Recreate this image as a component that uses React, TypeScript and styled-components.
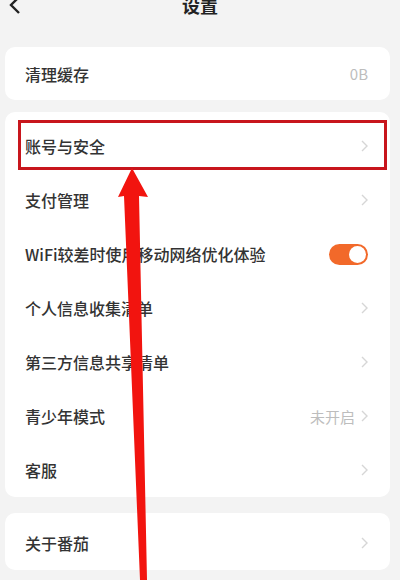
import styled, { createGlobalStyle } from "styled-components";

const Global = createGlobalStyle`
  html, body {
    margin: 0;
    padding: 0;
    background: #f3f3f3;
  }
  body {
    font-family: "Noto Sans CJK SC", "Noto Sans", sans-serif;
    color: #333;
  }
`;

const Page = styled.div`
  position: relative;
  width: 400px;
  height: 580px;
  overflow: hidden;
  background: #f3f3f3;
`;

const Header = styled.div`
  height: 48px;
  margin-top: -19px;
  display: flex;
  align-items: center;
  justify-content: center;
  position: relative;
`;

const Back = styled.svg`
  position: absolute;
  left: 8px;
  top: 14px;
`;

const Title = styled.div`
  font-size: 18px;
  font-weight: 700;
  color: #222;
`;

const Card = styled.div<{ $top: number; $pad?: number }>`
  margin: ${(p) => p.$top}px 10px 0 5px;
  padding-top: ${(p) => p.$pad ?? 0}px;
  background: #fff;
  border-radius: 10px;
`;

const Row = styled.div<{ $h?: number; $marked?: boolean }>`
  position: relative;
  height: ${(p) => p.$h ?? 54}px;
  display: flex;
  align-items: center;
  justify-content: space-between;
  padding: 0 22px 0 20px;
  font-size: 16px;

  ${(p) =>
    p.$marked &&
    `
    &::after {
      content: "";
      position: absolute;
      left: 13px;
      right: 3px;
      top: 1px;
      bottom: 3px;
      border: 3px solid #c8161d;
    }
  `}
`;

const Label = styled.span`
  color: #333;
  font-weight: 500;
`;

const Right = styled.span`
  display: flex;
  align-items: center;
  gap: 6px;
  color: #bdbdbd;
  font-size: 15px;
`;

const Toggle = styled.span`
  width: 39px;
  height: 21px;
  border-radius: 11px;
  background: #f2692a;
  position: relative;
  &::after {
    content: "";
    position: absolute;
    right: 2px;
    top: 2px;
    width: 17px;
    height: 17px;
    border-radius: 50%;
    background: #fff;
  }
`;

const Arrow = styled.svg`
  position: absolute;
  left: 0;
  top: 0;
  pointer-events: none;
`;

const Chevron = () => (
  <svg width="7" height="12" viewBox="0 0 7 12">
    <path d="M1 1l5 5-5 5" fill="none" stroke="#d6d6d6" strokeWidth="1.4" />
  </svg>
);

const items: { label: string; value?: string; toggle?: boolean; marked?: boolean }[] = [
  { label: "账号与安全", marked: true },
  { label: "支付管理" },
  { label: "WiFi较差时使用移动网络优化体验", toggle: true },
  { label: "个人信息收集清单" },
  { label: "第三方信息共享清单" },
  { label: "青少年模式", value: "未开启" },
  { label: "客服" },
];

export default function App() {
  return (
    <Page>
      <Global />
      <Header>
        <Back width="14" height="20" viewBox="0 0 14 20">
          <path d="M11 2L3 10l8 8" fill="none" stroke="#222" strokeWidth="2.4" />
        </Back>
        <Title>设置</Title>
      </Header>

      <Card $top={18}>
        <Row $h={53}>
          <Label>清理缓存</Label>
          <Right>0B</Right>
        </Row>
      </Card>

      <Card $top={12} $pad={7}>
        {items.map((it) => (
          <Row key={it.label} $marked={it.marked}>
            <Label>{it.label}</Label>
            {it.toggle ? (
              <Toggle />
            ) : (
              <Right>
                {it.value}
                <Chevron />
              </Right>
            )}
          </Row>
        ))}
      </Card>

      <Card $top={16} $pad={3}>
        <Row>
          <Label>关于番茄</Label>
          <Right>
            <Chevron />
          </Right>
        </Row>
      </Card>

      <Arrow width="400" height="580" viewBox="0 0 400 580">
        <polygon
          points="132,168 118,197 124,196 140,580 147,580 139,196 148,197"
          fill="#f2140f"
        />
      </Arrow>
    </Page>
  );
}
